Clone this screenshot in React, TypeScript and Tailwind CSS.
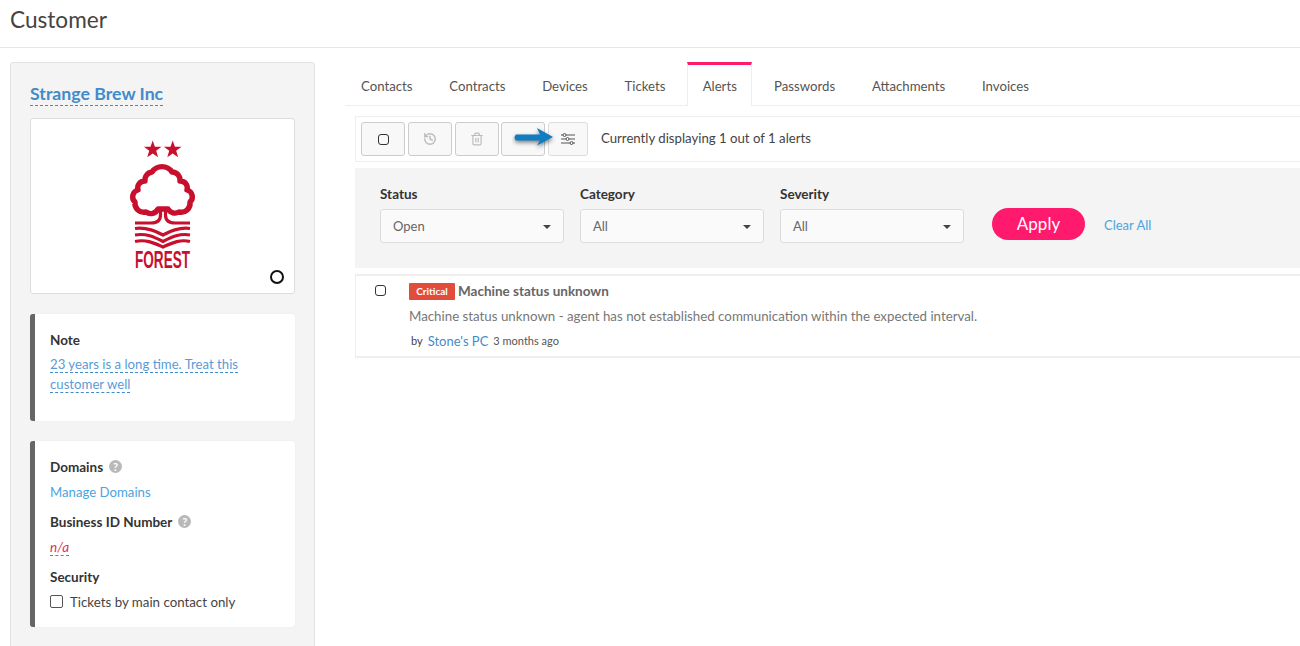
import { Trash2, History } from "lucide-react"

const tabs = ["Contacts", "Contracts", "Devices", "Tickets", "Alerts", "Passwords", "Attachments", "Invoices"]

function ForestLogo() {
  return (
    <svg width="90" height="150" viewBox="0 0 90 150">
      <g fill="#c8102e">
        <polygon points="32.7,9.5 34.9,15.8 41.5,15.8 36.2,19.8 38.1,26.2 32.7,22.4 27.3,26.2 29.2,19.8 23.9,15.8 30.5,15.8" />
        <polygon points="52.7,9.5 54.9,15.8 61.5,15.8 56.2,19.8 58.1,26.2 52.7,22.4 47.3,26.2 49.2,19.8 43.9,15.8 50.5,15.8" />
      </g>
      <path
        d="M38 78 A8 8 0 0 1 26 81 A9 9 0 0 1 15 71 A7 7 0 0 1 18 59 A7 7 0 0 1 25 50 A8 8 0 0 1 32 41 A12 12 0 0 1 52 41 A8 8 0 0 1 60 50 A7 7 0 0 1 67 59 A7 7 0 0 1 70 71 A9 9 0 0 1 59 81 A8 8 0 0 1 48 78 Z"
        fill="#fff"
        stroke="#c8102e"
        strokeWidth="5.4"
        strokeLinejoin="round"
      />
      <g fill="none" stroke="#c8102e" strokeWidth="3.2">
        <path d="M40.5 76 V84 Q40.5 92 31 92 H15" />
        <path d="M45.5 76 V84 Q45.5 92 55 92 H70" />
        <path d="M15 97.5 C26 96 34 99 43 104 C52 99 60 96 70 97.5" />
        <path d="M15 104 C26 102 34 106 43 110.5 C52 106 60 102 70 104" />
        <path d="M15 110.5 C26 108 34 112 43 116 C52 112 60 108 70 110.5" />
      </g>
      <text
        transform="translate(15 137) scale(0.97 1.75)"
        fill="#c8102e"
        fontSize="14"
        fontWeight="700"
        fontFamily="'Liberation Sans', sans-serif"
      >
        FOREST
      </text>
    </svg>
  )
}

function Help() {
  return (
    <span className="ml-[6px] inline-flex h-[13px] w-[13px] items-center justify-center rounded-full bg-[#b9b9b9] text-[11px] leading-none font-bold text-white">
      ?
    </span>
  )
}

function SlidersIcon() {
  return (
    <svg width="14" height="12" viewBox="0 0 14 12" fill="none" stroke="#555" strokeWidth="1">
      <path d="M0 2 H14 M0 6 H14 M0 10 H14" />
      <circle cx="3.5" cy="2" r="1.5" fill="#fff" />
      <circle cx="6.5" cy="6" r="1.5" fill="#fff" />
      <circle cx="10.5" cy="10" r="1.5" fill="#fff" />
    </svg>
  )
}

function Select({ label, value }: { label: string; value: string }) {
  return (
    <div className="w-[184px]">
      <div className="mb-[6px] text-[13.5px] leading-[18px] font-bold text-[#333]">{label}</div>
      <div className="flex h-[34px] items-center justify-between rounded-[3px] border border-[#ddd] bg-[#fafafa] pt-[2px] pr-[12px] pl-[12px] text-[13px] text-[#666]">
        {value}
        <span className="h-0 w-0 border-t-[4px] border-r-[4px] border-l-[4px] border-t-[#444] border-r-transparent border-l-transparent" />
      </div>
    </div>
  )
}

const toolBtn = "flex h-[34px] items-center justify-center rounded-[3px] border bg-[#f8f8f8]"

export default function App() {
  return (
    <div className="relative h-[646px] w-[1300px] overflow-hidden bg-white font-['Lato',sans-serif] text-[13.2px] text-[#444]">
      <header className="flex h-[48px] items-center border-b border-[#e6e6e6] pb-[8px] pl-[10px] text-[22.6px] text-[#444]">Customer</header>

      <div className="flex gap-[30px] pt-[14px] pl-[10px]">
        {/* sidebar */}
        <aside className="h-[600px] w-[305px] shrink-0 rounded-[3px] border border-[#e3e3e3] bg-[#f4f4f4] px-[19px] pt-[21px]">
          <div className="mb-[12px]">
            <span className="border-b border-dashed border-[#428bca] pb-[1px] text-[17.7px] leading-[20px] font-bold text-[#428bca]">Strange Brew Inc</span>
          </div>
          <div className="relative flex h-[176px] justify-center rounded-[3px] border border-[#ddd] bg-white pt-[12px]">
            <div className="ml-[5px]"><ForestLogo /></div>
            <span className="absolute right-[10px] bottom-[9px] h-[14px] w-[14px] rounded-full border-2 border-[#111]" />
          </div>

          <div className="mt-[20px] h-[107px] rounded-[3px] border-l-[5px] border-[#666] bg-white pt-[17px] pl-[15px] shadow-[0_0_1px_#ddd]">
            <div className="text-[13.5px] leading-[18px] font-bold text-[#333]">Note</div>
            <div className="mt-[5px] w-[200px] text-[13.2px] leading-[20px] text-[#5b9bd5]">
              <span className="border-b border-dashed border-[#428bca]">23 years is a long time. Treat this</span>{" "}
              <span className="border-b border-dashed border-[#428bca]">customer well</span>
            </div>
          </div>

          <div className="mt-[20px] h-[186px] rounded-[3px] border-l-[5px] border-[#666] bg-white pt-[17px] pl-[15px] shadow-[0_0_1px_#ddd]">
            <div className="flex items-center text-[13.5px] leading-[18px] font-bold text-[#333]">Domains<Help /></div>
            <div className="mt-[7px] text-[13.2px] leading-[18px] text-[#4aa5e0]">Manage Domains</div>
            <div className="mt-[12px] flex items-center text-[13.5px] leading-[18px] font-bold text-[#333]">Business ID Number<Help /></div>
            <div className="mt-[7px] leading-[18px]">
              <span className="border-b border-dashed border-[#428bca] text-[13.5px] text-[#d9305f] italic">n/a</span>
            </div>
            <div className="mt-[12px] text-[13.5px] leading-[18px] font-bold text-[#333]">Security</div>
            <div className="mt-[7px] flex items-center gap-[7px] text-[13.3px] leading-[18px] text-[#444]">
              <span className="h-[13px] w-[13px] rounded-[2px] border border-[#555] bg-white" />
              Tickets by main contact only
            </div>
          </div>
        </aside>

        {/* main */}
        <main className="min-w-0 flex-1">
          <nav className="flex h-[44px] gap-[6.8px] border-b border-[#eee] pl-[1px] text-[#555]">
            {tabs.map((t) =>
              t === "Alerts" ? (
                <div key={t} className="flex h-[44px] w-[65px] items-center justify-center border-x border-t-[3px] border-x-[#eee] border-t-[#ff1a6e] bg-white pt-[3px]">{t}</div>
              ) : (
                <div key={t} className="flex h-[44px] items-center px-[15px] pt-[5px]">{t}</div>
              ),
            )}
          </nav>

          <div className="mt-[10px] ml-[10px] flex h-[46px] items-center border-y border-l border-[#eee] pl-[5px]">
            <div className={`${toolBtn} w-[44px] border-[#ccc]`}><span className="h-[11px] w-[11px] rounded-[3px] border border-[#333]" /></div>
            <div className={`${toolBtn} ml-[3px] w-[44px] border-[#ccc] text-[#bbb]`}><History size={14} strokeWidth={2.4} /></div>
            <div className={`${toolBtn} ml-[3px] w-[44px] border-[#ccc] text-[#bbb]`}><Trash2 size={14} /></div>
            <div className={`${toolBtn} ml-[2px] w-[44px] border-[#ccc]`} />
            <div className={`${toolBtn} ml-[3px] w-[40px] border-[#ddd]`}><SlidersIcon /></div>
            <span className="ml-[13px]">Currently displaying 1 out of 1 alerts</span>
          </div>

          <div className="mt-[6px] ml-[10px] flex h-[100px] bg-[#f4f4f4] pt-[17px] pl-[25px]">
            <div className="flex gap-[16px]">
              <Select label="Status" value="Open" />
              <Select label="Category" value="All" />
              <Select label="Severity" value="All" />
            </div>
            <div className="mt-[23px] ml-[28px] flex h-[32px] w-[93px] items-center justify-center rounded-full bg-[#ff1a6e] text-[17px] text-white">Apply</div>
            <div className="mt-[25px] ml-[19px] flex h-[32px] items-center text-[13px] text-[#4aa5e0]">Clear All</div>
          </div>

          <div className="mt-[6px] ml-[10px] flex h-[84px] border-y-[2px] border-l border-[#eee] pt-[7px]">
            <span className="mt-[2px] ml-[19px] h-[11px] w-[11px] shrink-0 rounded-[3px] border border-[#333]" />
            <div className="ml-[23px]">
              <div className="flex items-center leading-[17px]">
                <span className="flex h-[17px] w-[46px] items-center justify-center rounded-[1px] bg-[#e24c3a] text-[10px] font-bold text-white">Critical</span>
                <span className="ml-[3px] text-[13.5px] font-bold text-[#666]">Machine status unknown</span>
              </div>
              <div className="mt-[7px] text-[13.3px] leading-[18px] text-[#777]">Machine status unknown - agent has not established communication within the expected interval.</div>
              <div className="mt-[7px] ml-[2px] flex items-center leading-[18px]">
                <span className="text-[11px] text-[#444]">by</span>
                <span className="ml-[5px] text-[13px] text-[#428bca]">Stone's PC</span>
                <span className="ml-[5px] text-[11px] text-[#555]">3 months ago</span>
              </div>
            </div>
          </div>
        </main>
      </div>

      {/* annotation arrow drawn over the toolbar */}
      <svg className="absolute top-[126px] left-[512px]" width="46" height="26" viewBox="0 0 46 26">
        <path d="M4 8.5 H28 L25 2 L41 11 L25 19.5 L28 14.5 H4 Q1 11.5 4 8.5 Z" fill="#0f7dc0" style={{ filter: "drop-shadow(0 2px 2px rgba(0,0,0,.5))" }} />
      </svg>
    </div>
  )
}
